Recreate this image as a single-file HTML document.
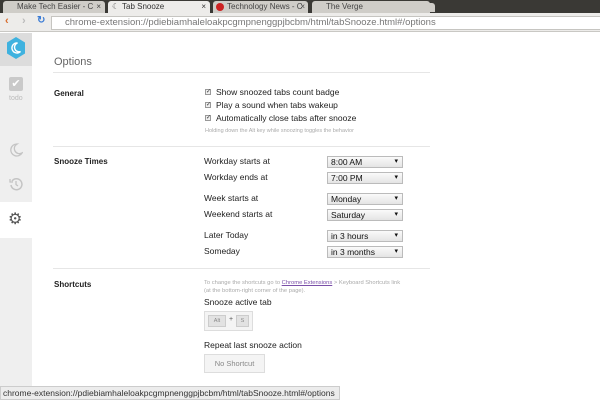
<!DOCTYPE html><html><head><style>
*{margin:0;padding:0;box-sizing:border-box}
body{width:600px;height:400px;overflow:hidden;font-family:"Liberation Sans",sans-serif;background:#fff;position:relative;color:#222}
.a{position:absolute;white-space:nowrap}
.tab{position:absolute;top:1px;height:12px;background:#cfcdc8;border-radius:3px 3px 0 0;font-size:8px;color:#444;padding:1px 0 0 14px}
.sel{position:absolute;left:327px;width:76px;height:12px;border:1px solid #bbb;background:linear-gradient(#fafafa,#e4e4e4);font-size:8.5px;line-height:10px;padding:0 0 0 3px;color:#111}
.sel:after{content:"▾";position:absolute;right:4px;top:0;font-size:7px}
.lab{font-size:8.5px;color:#222}
.cb{position:absolute;width:6px;height:6px;border:1px solid #999;background:#eee;font-size:6px;line-height:5px;color:#333;text-align:center}
</style></head><body>
<div class="a" style="left:0;top:0;width:600px;height:13px;background:#3a3935"></div>
<div class="tab" style="left:3px;width:102px">Make Tech Easier - C<span style="position:absolute;right:4px">×</span></div>
<div class="tab" style="left:108px;width:102px;background:#edecea;color:#333">Tab Snooze<span style="position:absolute;right:4px">×</span></div>
<div class="a" style="left:112px;top:2px;font-size:8px;color:#555">☾</div>
<div class="tab" style="left:213px;width:95px">Technology News - C<span style="position:absolute;right:3px">×</span></div>
<div class="a" style="left:216px;top:3px;width:8px;height:8px;border-radius:50%;background:#c22"></div>
<div class="tab" style="left:312px;width:118px">The Verge</div>
<div class="tab" style="left:421px;width:14px;top:3px;height:9px"></div>
<div class="a" style="left:0;top:13px;width:600px;height:19px;background:#edecea;border-bottom:1px solid #c9c8c4"></div>
<div class="a" style="left:5px;top:15px;font-size:11px;color:#d76a2a;font-weight:bold">‹</div>
<div class="a" style="left:22px;top:15px;font-size:11px;color:#bbb;font-weight:bold">›</div>
<div class="a" style="left:37px;top:15px;font-size:10px;color:#3a7bd5;font-weight:bold">↻</div>
<div class="a" style="left:51px;top:16px;width:549px;height:14px;background:#fff;border:1px solid #c6c5c1;border-right:none"></div>
<div class="a" style="left:65px;top:17px;font-size:9.5px;color:#777">chrome-extension://pdiebiamhaleloakpcgmpnenggpjbcbm/html/tabSnooze.html#/options</div>
<div class="a" style="left:0;top:33px;width:32px;height:367px;background:#efefef"></div>
<div class="a" style="left:0;top:33px;width:32px;height:33px;background:#dcdcdc"></div>
<svg class="a" style="left:6px;top:37px" width="20" height="22" viewBox="0 0 20 22"><polygon points="10,0 19,5.5 19,16.5 10,22 1,16.5 1,5.5" fill="#3fb2df"/><path d="M11.5 6a5 5 0 1 0 3 8.5a4 4 0 0 1 -3 -8.5z" fill="none" stroke="#fff" stroke-width="1.4"/></svg>
<div class="a" style="left:9px;top:77px;width:14px;height:14px;background:#c9c9c9;border-radius:2px;color:#fff;font-size:11px;text-align:center;line-height:14px">✔</div>
<div class="a" style="left:9px;top:95px;font-size:7px;color:#bbb">todo</div>
<svg class="a" style="left:9px;top:143px" width="14" height="14" viewBox="0 0 14 14"><path d="M8 1a6 6 0 1 0 5 9a5 5 0 0 1 -5 -9z" fill="none" stroke="#c4c4c4" stroke-width="1.3"/></svg>
<svg class="a" style="left:9px;top:177px" width="14" height="14" viewBox="0 0 14 14"><path d="M3 4a5.5 5.5 0 1 1 -1 4" fill="none" stroke="#c4c4c4" stroke-width="1.5"/><path d="M1 2v3h3" fill="none" stroke="#c4c4c4" stroke-width="1.3"/><path d="M7 4v3.5l2 1.5" fill="none" stroke="#c4c4c4" stroke-width="1.3"/></svg>
<div class="a" style="left:0;top:202px;width:32px;height:36px;background:#fff"></div>
<div class="a" style="left:8px;top:209px;font-size:16px;color:#555">⚙</div>
<div class="a" style="left:54px;top:56px;font-size:11px;color:#666">Options</div>
<div class="a" style="left:53px;top:72px;width:377px;height:1px;background:#e6e6e6"></div>
<div class="a" style="left:54px;top:89px;font-size:8px;font-weight:bold">General</div>
<div class="cb" style="left:205px;top:89px">✓</div><div class="a lab" style="left:216px;top:87px">Show snoozed tabs count badge</div>
<div class="cb" style="left:205px;top:102px">✓</div><div class="a lab" style="left:216px;top:100px">Play a sound when tabs wakeup</div>
<div class="cb" style="left:205px;top:115px">✓</div><div class="a lab" style="left:216px;top:113px">Automatically close tabs after snooze</div>
<div class="a" style="left:205px;top:128px;font-size:5.5px;color:#aaa">Holding down the Alt key while snoozing toggles the behavior</div>
<div class="a" style="left:53px;top:146px;width:377px;height:1px;background:#e6e6e6"></div>
<div class="a" style="left:54px;top:157px;font-size:8px;font-weight:bold">Snooze Times</div>
<div class="a lab" style="left:204px;top:156px">Workday starts at</div><div class="sel" style="top:156px">8:00 AM</div>
<div class="a lab" style="left:204px;top:172px">Workday ends at</div><div class="sel" style="top:172px">7:00 PM</div>
<div class="a lab" style="left:204px;top:193px">Week starts at</div><div class="sel" style="top:193px">Monday</div>
<div class="a lab" style="left:204px;top:209px">Weekend starts at</div><div class="sel" style="top:209px">Saturday</div>
<div class="a lab" style="left:204px;top:230px">Later Today</div><div class="sel" style="top:230px">in 3 hours</div>
<div class="a lab" style="left:204px;top:246px">Someday</div><div class="sel" style="top:246px">in 3 months</div>
<div class="a" style="left:53px;top:268px;width:377px;height:1px;background:#e6e6e6"></div>
<div class="a" style="left:54px;top:280px;font-size:8px;font-weight:bold">Shortcuts</div>
<div class="a" style="left:204px;top:279px;font-size:5.8px;color:#aaa;line-height:8px">To change the shortcuts go to <span style="color:#7a4fa8;text-decoration:underline">Chrome Extensions</span> &gt; Keyboard Shortcuts link<br>(at the bottom-right corner of the page).</div>
<div class="a lab" style="left:204px;top:297px">Snooze active tab</div>
<div class="a" style="left:204px;top:311px;width:49px;height:20px;border:1px solid #ddd;background:#f4f4f4"></div>
<div class="a" style="left:208px;top:315px;width:18px;height:12px;border:1px solid #ccc;background:#e2e2e2;font-size:5.5px;color:#888;text-align:center;line-height:11px">Alt</div>
<div class="a" style="left:229px;top:316px;font-size:7px;color:#555">+</div>
<div class="a" style="left:236px;top:315px;width:13px;height:12px;border:1px solid #ccc;background:#e2e2e2;font-size:5.5px;color:#888;text-align:center;line-height:11px">S</div>
<div class="a lab" style="left:204px;top:340px">Repeat last snooze action</div>
<div class="a" style="left:204px;top:354px;width:61px;height:19px;border:1px solid #ddd;background:#f4f4f4;font-size:7.5px;color:#888;text-align:center;line-height:18px">No Shortcut</div>
<div class="a lab" style="left:204px;top:384px">Open snoozed tabs list</div>
<div class="a" style="left:0;top:386px;width:340px;height:14px;background:#ececec;border:1px solid #ccc;font-size:8.5px;color:#333;padding:1px 0 0 2px">chrome-extension://pdiebiamhaleloakpcgmpnenggpjbcbm/html/tabSnooze.html#/options</div>
</body></html>
